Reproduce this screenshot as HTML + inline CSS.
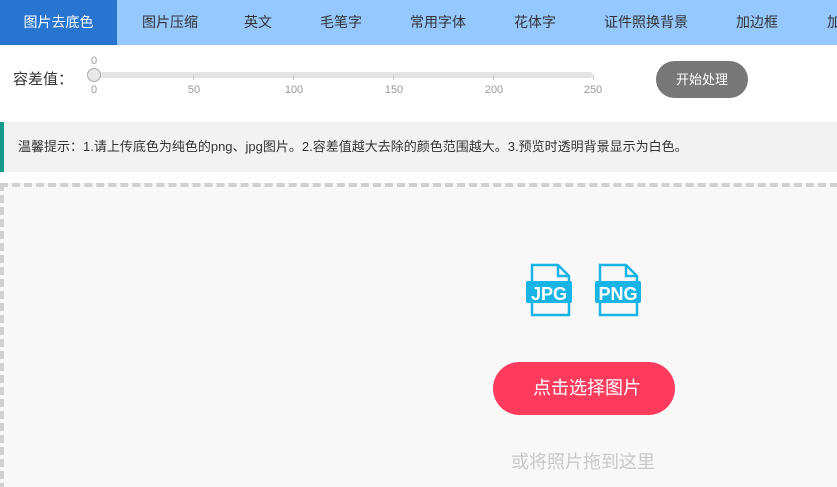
<!DOCTYPE html>
<html><head><meta charset="utf-8"><style>
*{margin:0;padding:0;box-sizing:border-box}
html,body{width:837px;height:487px;overflow:hidden}
body{background:#fff;font-family:"Liberation Sans","Noto Sans CJK SC",sans-serif;position:relative}
.nav{position:absolute;left:0;top:0;width:837px;height:45px;background:#95c8fe}
.nav div{position:absolute;top:0;height:45px;line-height:45px;font-size:14px;color:#333}
.nav .act{left:0;width:117px;background:#2775cf;color:#fff;text-align:center}
.abs{position:absolute}
.tick{position:absolute;top:75px;width:1px;height:5px;background:#ccc}
.lbl{position:absolute;top:84px;font-size:11px;color:#999;transform:translateX(-50%)}
</style></head><body>
<div class="nav">
<div class="act">图片去底色</div>
<div style="left:142px">图片压缩</div>
<div style="left:244px">英文</div>
<div style="left:320px">毛笔字</div>
<div style="left:410px">常用字体</div>
<div style="left:514px">花体字</div>
<div style="left:604px">证件照换背景</div>
<div style="left:736px">加边框</div>
<div style="left:827px">加</div>
</div>
<div class="abs" style="left:13px;top:68px;font-size:15px;color:#333">容差值：</div>
<div class="abs" style="left:91px;top:55px;font-size:11px;color:#999">0</div>
<div class="abs" style="left:94px;top:72px;width:499px;height:6px;background:#e4e4e4;border-radius:3px"></div>
<div class="abs" style="left:87px;top:68px;width:14px;height:14px;border-radius:50%;background:#e8e8e8;border:1px solid #aaa"></div>
<div class="tick" style="left:193px"></div><div class="tick" style="left:293px"></div><div class="tick" style="left:393px"></div><div class="tick" style="left:493px"></div><div class="tick" style="left:593px"></div>
<div class="lbl" style="left:94px">0</div><div class="lbl" style="left:194px">50</div><div class="lbl" style="left:294px">100</div><div class="lbl" style="left:394px">150</div><div class="lbl" style="left:494px">200</div><div class="lbl" style="left:593px">250</div>
<div class="abs" style="left:656px;top:61px;width:92px;height:37px;border-radius:19px;background:#777;color:#fff;font-size:13px;line-height:37px;text-align:center">开始处理</div>
<div class="abs" style="left:0;top:122px;width:837px;height:50px;background:#f2f2f2;border-left:4px solid #139a8a;font-size:13px;color:#333;line-height:50px;padding-left:14px">温馨提示：1.请上传底色为纯色的png、jpg图片。2.容差值越大去除的颜色范围越大。3.预览时透明背景显示为白色。</div>
<div class="abs" style="left:0;top:183px;width:850px;height:320px;background:#f8f8f8;border:4px dashed #d0d0d0"></div>
<svg class="abs" style="left:520px;top:260px" width="130" height="60">
<g fill="none" stroke="#19b4e6" stroke-width="2.5">
<path d="M12 5H38L49 16V55H12Z M38 5V16H49"/>
<path d="M80 5H106L117 16V55H80Z M106 5V16H117"/>
</g>
<rect x="6" y="21" width="46" height="22" rx="2" fill="#19b4e6"/>
<rect x="75" y="21" width="46" height="22" rx="2" fill="#19b4e6"/>
<text x="29" y="40" fill="#fff" font-size="18" font-weight="bold" text-anchor="middle" font-family="Liberation Sans">JPG</text>
<text x="98" y="40" fill="#fff" font-size="18" font-weight="bold" text-anchor="middle" font-family="Liberation Sans">PNG</text>
</svg>
<div class="abs" style="left:493px;top:362px;width:182px;height:53px;border-radius:27px;background:#fe3b5c;color:#fff;font-size:18px;line-height:53px;text-align:center;padding-left:6px">点击选择图片</div>
<div class="abs" style="left:511px;top:448px;font-size:18px;color:#c8c8c8">或将照片拖到这里</div>
</body></html>
